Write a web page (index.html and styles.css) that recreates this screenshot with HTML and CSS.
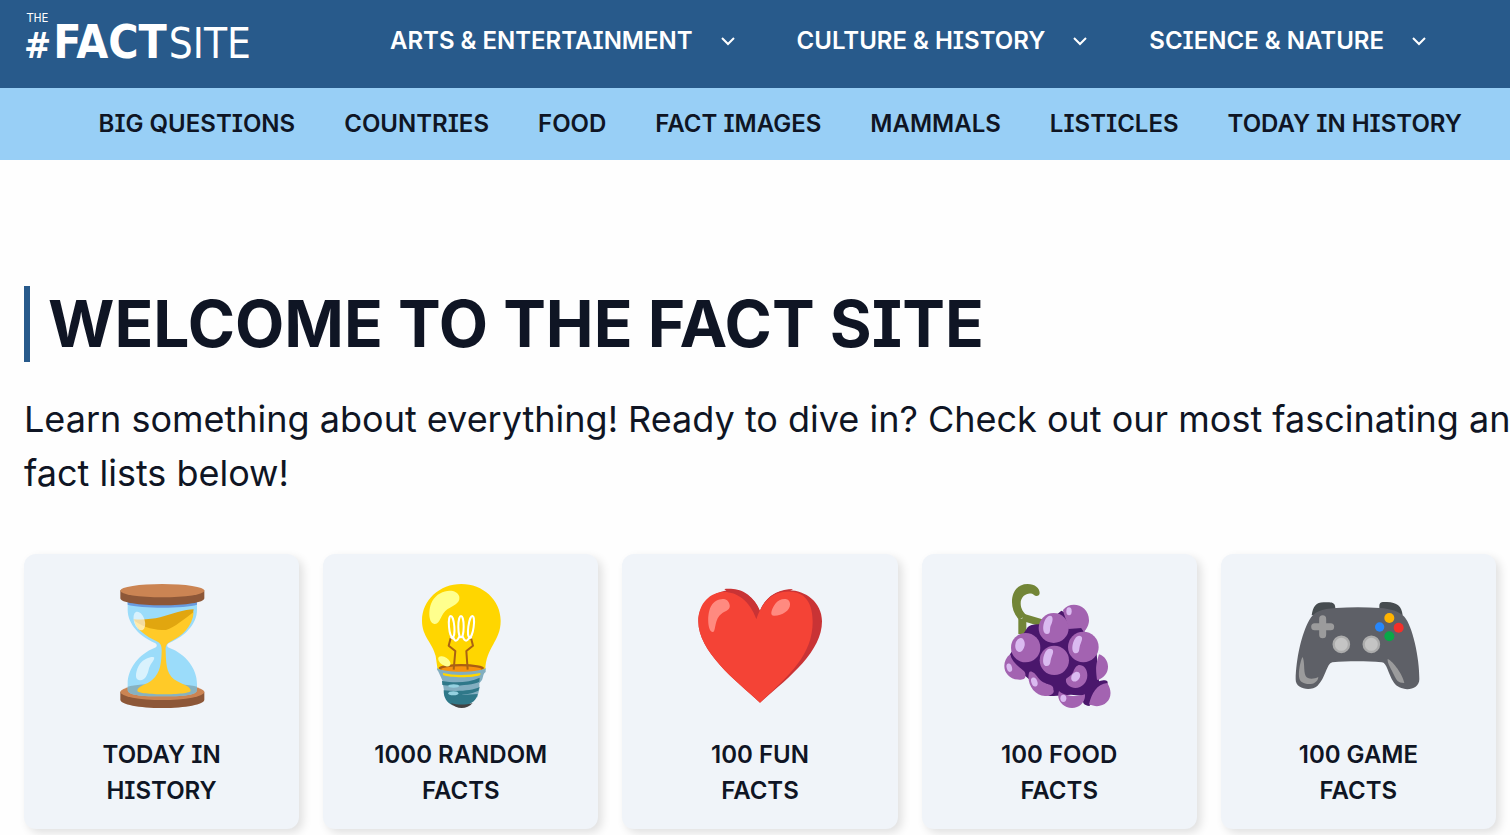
FILE: index.html
```html
<!DOCTYPE html>
<html lang="en">
<head>
<meta charset="utf-8">
<meta name="viewport" content="width=device-width, initial-scale=1">
<title>The Fact Site</title>
<link rel="stylesheet" href="styles.css">
</head>
<body>
<header>
  <div class="topbar">
    <a class="logo" href="#" aria-label="The Fact Site">
      <span class="logo-prefix"><span class="logo-the">THE</span><span class="logo-hash">#</span></span>
      <span class="logo-fact">FACT</span>
      <span class="logo-site">SITE</span>
    </a>
    <nav class="main-nav" aria-label="Main">
      <div class="nav-item"><a href="#">ARTS &amp; ENTERTAINMENT</a><button class="toggle" aria-label="Open Arts &amp; Entertainment"><svg viewBox="0 0 14 9"><path d="M1 1l6 6 6-6"/></svg></button></div>
      <div class="nav-item"><a href="#">CULTURE &amp; HISTORY</a><button class="toggle" aria-label="Open Culture &amp; History"><svg viewBox="0 0 14 9"><path d="M1 1l6 6 6-6"/></svg></button></div>
      <div class="nav-item"><a href="#">SCIENCE &amp; NATURE</a><button class="toggle" aria-label="Open Science &amp; Nature"><svg viewBox="0 0 14 9"><path d="M1 1l6 6 6-6"/></svg></button></div>
    </nav>
  </div>
  <nav class="sub-nav" aria-label="Topics">
    <a href="#">BIG QUESTIONS</a>
    <a href="#">COUNTRIES</a>
    <a href="#">FOOD</a>
    <a href="#">FACT IMAGES</a>
    <a href="#">MAMMALS</a>
    <a href="#">LISTICLES</a>
    <a href="#">TODAY IN HISTORY</a>
  </nav>
</header>
<main>
  <h1>WELCOME TO THE FACT SITE</h1>
  <p class="intro">Learn something about everything! Ready to dive in? Check out our most fascinating and<br>fact lists below!</p>
  <div class="cards">
    <a class="card" href="#">
      <svg class="emoji" viewBox="23 36 384 384" aria-hidden="true">
        <path fill="#8d5738" d="M90 365v24c0 14 56 25 126 25s126-11 126-25v-24z"/>
        <ellipse cx="216" cy="366" rx="126" ry="24" fill="#cb8453"/>
        <path fill="#9bdcfa" d="M112 90h208v30c0 42-37 80-82 98-10 4-10 12 0 16 47 18 82 60 82 108v17c0 13-20 20-104 20s-104-7-104-20v-17c0-48 35-90 80-108 10-4 10-12 0-16-43-18-80-56-80-98z"/>
        <path fill="#7d9ba3" opacity=".65" d="M112 350c20-6 60-9 104-9s84 3 104 9v9c0 13-20 20-104 20s-104-7-104-20z"/>
        <path fill="#e1a60f" d="M130 148c57 4 91-9 130-21 20-6 38-9 50-9l-5 27-90 50-70-17z"/>
        <path fill="#ffca28" d="M132 152c30 22 63 28 95 28 27-8 54-33 83-54-3 44-35 72-70 89-11 5-15 12-14 28 1 49 5 76 35 91 24 12 40 17 40 28 0 14-160 14-160 0 0-15 29-18 45-33 25-22 27-52 28-87 0-15-3-22-15-28-32-16-62-36-67-62z"/>
        <path fill="#699bdf" d="M112 88h208v16c-35 12-170 12-208 0z"/>
        <path fill="#8d5738" d="M90 61v24c0 13 56 21 126 21s126-8 126-21V61z"/>
        <ellipse cx="216" cy="62" rx="126" ry="20" fill="#cb8453"/>
        <ellipse cx="147" cy="153" rx="16" ry="29" transform="rotate(-18 147 153)" fill="#fff" opacity=".6"/>
        <path fill="#fff" opacity=".62" d="M192 263c-2-6-30 0-43 18-12 17-18 46-4 49 18 4 26-14 30-31 4-18 15-24 17-36z"/>
      </svg>
      <span>TODAY IN HISTORY</span>
    </a>
    <a class="card" href="#">
      <svg class="emoji" viewBox="20 36 384 384" aria-hidden="true">
        <path fill="#ffd600" d="M213 42c-65 0-118 48-118 110 0 48 32 66 41 106l6 42h143c1-69 46-85 46-148 0-62-53-110-118-110z"/>
        <ellipse cx="213" cy="294" rx="68" ry="12" fill="#ab5e12"/><ellipse cx="213" cy="298" rx="61" ry="9" fill="#f7920e"/>
        <path fill="none" stroke="#a96213" stroke-width="6" stroke-linejoin="round" d="M190 299l5-56-20-16 6-23M232 299l-4-56 20-16-6-23"/>
        <g fill="none" stroke="#fff" stroke-width="6" stroke-linecap="round"><ellipse cx="184" cy="170" rx="8" ry="32" transform="rotate(-5 184 170)"/><ellipse cx="212" cy="170" rx="8" ry="32"/><ellipse cx="242" cy="170" rx="8" ry="32" transform="rotate(8 242 170)"/><path d="M183 203l6 3M188 200q8 24 19 0M217 200q10 24 21 0M236 204l6-1"/></g>
        <path fill="#ffff8d" d="M207 80c-9-29-62-22-81 13-12 21-13 63 4 68 20 6 19-29 42-44 15-10 38-16 35-37z"/>
        <ellipse cx="162" cy="274" rx="21" ry="12" transform="rotate(35 162 274)" fill="#ffff8d"/>
        <path fill="#82aec0" d="M140 294c20 15 124 15 146 0v12c-8 5-7 16-11 24l-8 10v18l-6 24H164l-2-14-6-37-10-22c-2-7-7-8-6-15z"/>
        <path fill="#ffd600" d="M158 309c31 8 77 8 112 0v6c-19 9-92 9-112 0z"/>
        <path fill="#2f7889" d="M155 333c45 8 84 3 113-10l-1 12c-20 11-82 14-111 10zm5 28c46 4 84 1 108-10l-4 11c-18 10-50 11-49 13l47-3c-4 20-17 26-31 34h-45c-17-9-26-22-26-45z"/>
        <path fill="#424242" d="M181 399c20 6 45 6 66 0-17 20-49 20-66 0z"/>
        <g fill="#94d1e0"><ellipse cx="190" cy="348" rx="16" ry="5"/><ellipse cx="189" cy="370" rx="15" ry="6"/></g>
      </svg>
      <span>1000 RANDOM FACTS</span>
    </a>
    <a class="card" href="#">
      <svg class="emoji" viewBox="33 36 384 384" aria-hidden="true">
        <path fill="#c93335" d="M225 398C150 330 40 245 40 154c0-98 145-135 185-32 40-103 186-66 186 32 0 91-98 168-186 244z"/>
        <path fill="#c93335" d="M118 57c40-3 80 5 107 68l-11 22zM225 125c18-50 60-68 99-68l-60 40z"/>
        <path fill="#f44336" d="M225 398C150 330 40 245 40 154c0-106 132-126 174-7 21-60 55-85 103-82 50 2 66 43 66 90 0 102-74 163-158 243z"/>
        <path fill="#ff8a80" d="M134 105c-6-29-43-18-55 2-13 20-13 76 3 79 11 2 5-30 21-49 14-16 34-14 31-32zM315 101c-2-22-33-16-44 0-10 14-20 37-3 36 25-1 49-16 47-36z"/>
      </svg>
      <span>100 FUN FACTS</span>
    </a>
    <a class="card" href="#">
      <svg class="emoji" viewBox="32 36 384 384" aria-hidden="true">
        <path fill="none" stroke="#728537" stroke-width="24" d="M114 192v-46"/>
        <path fill="none" stroke="#728537" stroke-width="22" stroke-linejoin="round" d="M171 158l-56-16"/>
        <path fill="#728537" d="M104 149C70 114 76 42 130 42c22 0 36 12 36 27 0 8-10 13-17 6-13-11-40 0-40 25 0 17 9 28 17 36z"/>
        <path fill="#4a176c" d="M130 172q10-12 50-8l51-42 20 10 48 50 38 70 7 82c25-8 28 0 25 8l-54 66c-25-3-20-18-15-30l-40-4-52 4c-20 2-22-6-28-12l-60-50c-10 12-22 12-30 9l-13-72 5-8z"/>
        <g fill="#a363b1">
          <path d="M236 120c23-30 78-16 78 31 0 13-7 27-16 36l-6-13-40 3c-3-24-14-42-16-57zM77 253c-32 27-17 76 29 76 10 0 20-4 17-14 4-17-35-23-46-62z"/>
          <path d="M134 308c-8 32 15 69 48 70 14 1 31-8 25-19 2-22-28-8-49-40-5-8-20-20-24-11zM344 253c37 12 37 66-6 77-3-31-6-37 6-77zM224 363c-10 26 12 51 39 51 22 0 41-18 39-41-25 9-61 6-78-10zM369 339c28 45-10 84-55 64 8-34 23-60 55-64z"/>
          <path d="M245 328c0-5 16-9 22-23 5-14 12-20 18-20 13 0 24 12 24 31 0 22-16 38-36 38-14 0-31-11-28-26z"/>
          <circle cx="208" cy="174" r="45"/><circle cx="124" cy="233" r="44"/><circle cx="297" cy="231" r="46"/><circle cx="210" cy="271" r="44"/>
        </g>
        <g fill="#dabaf0">
          <path d="M197 137c12 0 8 19 2 30-4 9 2 25-11 25-20-1-11-53 9-55zM196 236c16 0 10 14 5 27-4 11-1 24-14 25-19 1-10-51 9-52zM285 197c15 2 6 17 2 29-3 11-1 24-12 24-21-1-8-54 10-53z"/>
          <ellipse cx="107" cy="225" rx="14" ry="21" transform="rotate(10 107 225)"/><ellipse cx="254" cy="124" rx="8" ry="12"/><ellipse cx="75" cy="293" rx="8" ry="13" transform="rotate(-15 75 293)"/><ellipse cx="150" cy="336" rx="9" ry="14" transform="rotate(-20 150 336)"/><ellipse cx="237" cy="385" rx="9" ry="11"/><ellipse cx="274" cy="320" rx="12" ry="16" transform="rotate(35 274 320)"/>
        </g>
      </svg>
      <span>100 FOOD FACTS</span>
    </a>
    <a class="card" href="#">
      <svg class="emoji" viewBox="29 36 384 384" aria-hidden="true">
        <path fill="#464c50" d="M82 136c4-26 13-39 36-39 20-1 31-1 34 10l3 20zM285 120V107c1-12 9-11 23-11 30 1 44 12 47 40z"/>
        <path fill="#5e6067" d="M155 114c43-3 88-3 131 0 33 2 59 10 74 26 24 26 46 124 45 188 0 37-60 38-77 9-17-26-21-61-36-60-46-4-101-4-148 0-18 4-19 46-45 71-19 17-66 10-65-20 1-59 17-136 41-178 13-24 36-34 80-36z"/>
        <path fill="none" stroke="#9b9b9c" stroke-width="21" stroke-linecap="round" d="M115 146v48M91 170h48"/>
        <circle cx="315" cy="144" r="15" fill="#ffb300"/><circle cx="286" cy="171" r="14" fill="#2787fb"/><circle cx="343" cy="173" r="15" fill="#f52f2a"/><circle cx="315" cy="199" r="15" fill="#08a847"/>
        <g fill="#c4c4c4" stroke="#acacac" stroke-width="7"><circle cx="171" cy="223" r="23"/><circle cx="261" cy="223" r="23"/></g>
        <path fill="#9b9b9c" d="M54 261c-7 17-17 63-3 74 18 13 49 9 51-14-12 6-32 8-38-3-7-15-2-47-10-57zM310 267c-2 13 12 32 19 48 7 15 12 24 31 24-4-24-33-65-50-72z"/>
      </svg>
      <span>100 GAME FACTS</span>
    </a>
  </div>
</main>
</body>
</html>
```
FILE: styles.css
```css
* { box-sizing: border-box; }
body {
  margin: 0;
  background: #fefefe;
  color: #0f1524;
  font-family: Inter, "Liberation Sans", sans-serif;
  overflow-x: hidden;
}
a { color: inherit; text-decoration: none; }

.topbar {
  display: flex;
  align-items: center;
  justify-content: space-between;
  min-height: 88px;
  padding: 0 84px 6px 24px;
  background: #285a8b;
  color: #fff;
}
.logo {
  display: flex;
  align-items: last baseline;
  gap: 2px;
  font-family: "DejaVu Sans Condensed", sans-serif;
  font-weight: 700;
}
.logo-prefix { display: flex; flex-direction: column; align-items: center; }
.logo-the { font-size: 12px; line-height: 14px; font-weight: 400; }
.logo-hash { font-size: 36px; line-height: 42px; }
.logo-fact { font-size: 46px; line-height: 54px; }
.logo-site { font-size: 42px; line-height: 54px; font-weight: 400; }

.main-nav, .nav-item { display: flex; align-items: center; }
.main-nav { gap: 62px; }
.nav-item { gap: 28px; }
.main-nav a, .sub-nav a, .card span {
  font-size: 24px;
  line-height: 36px;
  font-weight: 600;
  font-feature-settings: "cv08";
  white-space: nowrap;
}
.toggle { display: flex; padding: 0; border: 0; background: none; color: inherit; }
.toggle svg { width: 14px; height: 9px; fill: none; stroke: currentColor; stroke-width: 2; }

.sub-nav {
  display: flex;
  align-items: center;
  justify-content: flex-end;
  gap: 49px;
  min-height: 72px;
  padding: 0 48px 0 24px;
  background: #98cff6;
}

main { padding: 126px 14px 24px 24px; }
h1 {
  margin: 0;
  padding-left: 18px;
  border-left: 6px solid #285a8b;
  font-size: 64px;
  line-height: 76px;
  font-weight: 700;
  font-feature-settings: "cv08";
}
.intro {
  width: max-content;
  margin: 30px 0 54px;
  font-size: 36px;
  line-height: 54px;
}
.cards { display: grid; grid-template-columns: repeat(5, 1fr); gap: 24px; }
.card {
  display: flex;
  flex-direction: column;
  align-items: center;
  gap: 27px;
  padding: 28px 48px 20px;
  border-radius: 12px;
  background: #f0f4f9;
  box-shadow: 4px 4px 10px rgba(0, 0, 0, .12);
  text-align: center;
}
.card span { white-space: normal; }
.emoji { width: 128px; height: 128px; }
```
